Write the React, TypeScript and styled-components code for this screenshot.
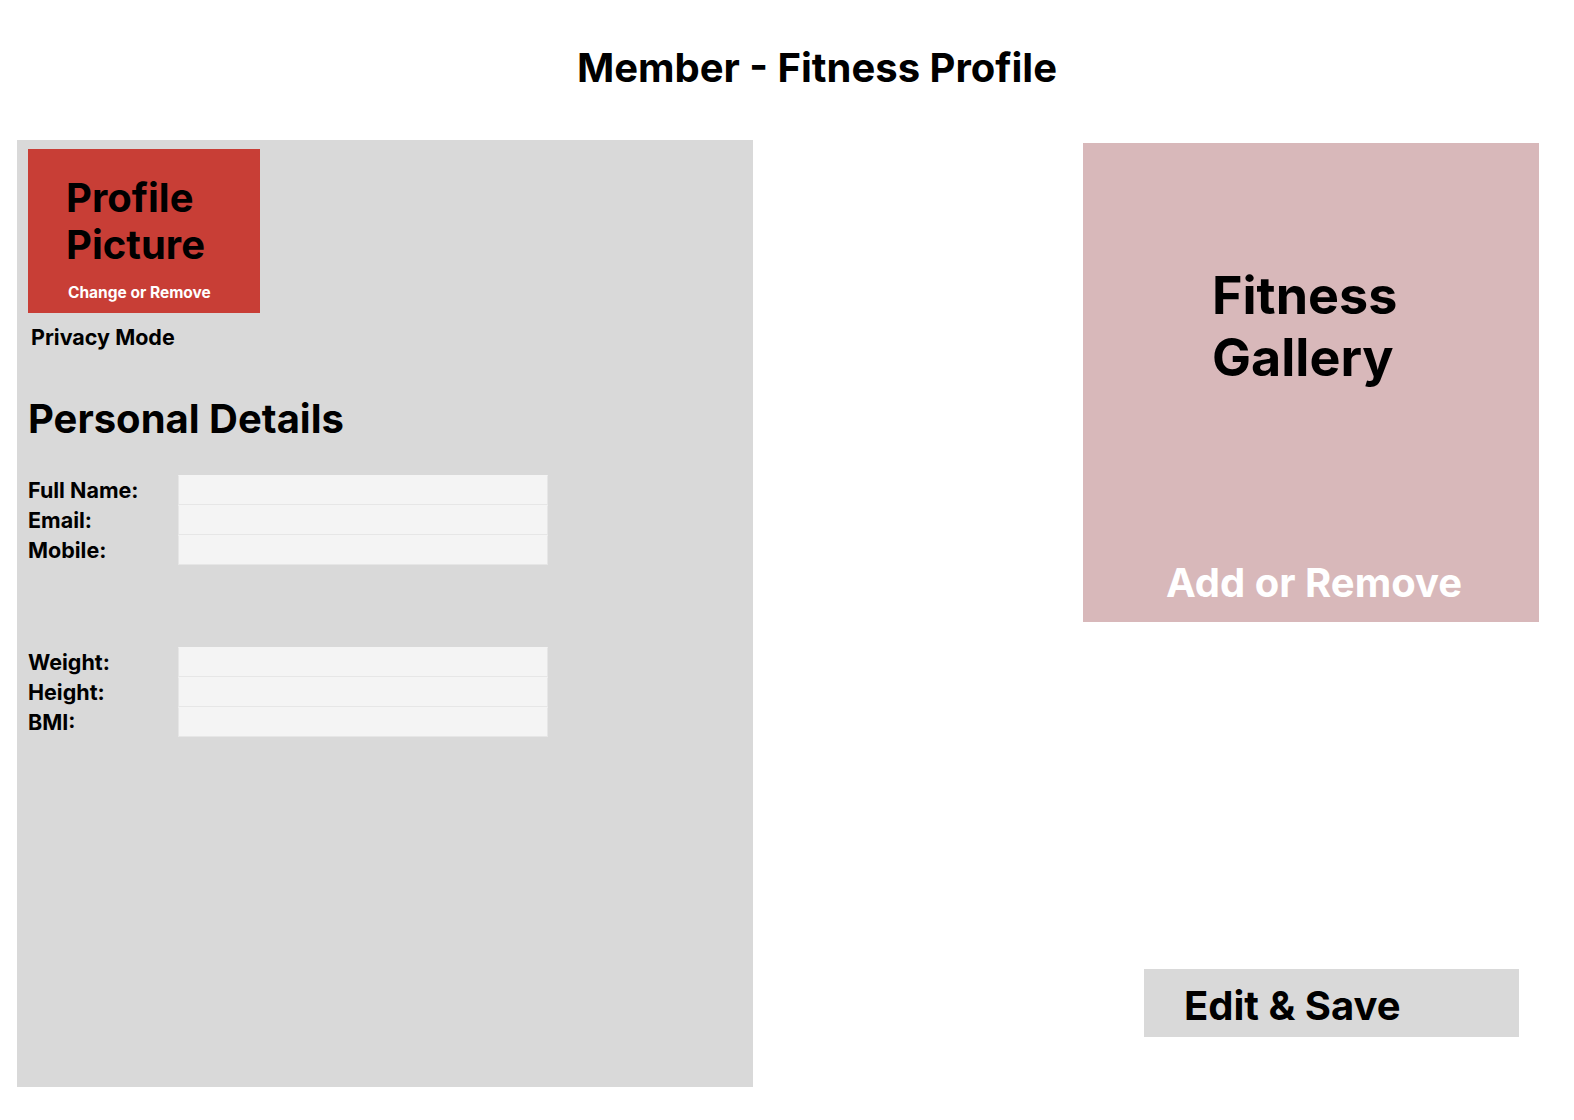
import { createGlobalStyle, styled } from "styled-components"

const GlobalStyle = createGlobalStyle`
body {
    margin: 0;
    background: #ffffff;
    font-family: Inter, "Noto Sans", sans-serif;
    color: #000000;
}
`

const contactFields = ["Full Name:", "Email:", "Mobile:"]
const bodyFields = ["Weight:", "Height:", "BMI:"]

function FieldGroup({ labels, top }: { labels: string[]; top: number }) {
    return (
        <Fields $top={top}>
            {labels.map((label) => (
                <FieldRow key={label}>
                    <Label>{label}</Label>
                    <Input />
                </FieldRow>
            ))}
        </Fields>
    )
}

export default function App() {
    return (
        <>
            <GlobalStyle />
            <Page>
                <Header>Member - Fitness Profile</Header>
                <Main>
                    <ProfilePanel>
                        <Avatar>
                            <AvatarTitle>Profile<br />Picture</AvatarTitle>
                            <AvatarAction>Change or Remove</AvatarAction>
                        </Avatar>
                        <Privacy>Privacy Mode</Privacy>
                        <SectionTitle>Personal Details</SectionTitle>
                        <FieldGroup labels={contactFields} top={32} />
                        <FieldGroup labels={bodyFields} top={82} />
                    </ProfilePanel>
                    <SideColumn>
                        <Gallery>
                            <GalleryTitle>Fitness<br />Gallery</GalleryTitle>
                            <GalleryAction>Add or Remove</GalleryAction>
                        </Gallery>
                        <SaveButton>Edit &amp; Save</SaveButton>
                    </SideColumn>
                </Main>
            </Page>
        </>
    )
}

const Page = styled.div`
width: 1574px;
min-height: 1120px;
`
const Header = styled.h1`
margin: 0;
padding: 44px 0 0 60px;
height: 140px;
box-sizing: border-box;
text-align: center;
font-size: 40px;
line-height: 48px;
font-weight: 700;
`
const Main = styled.div`
display: grid;
grid-template-columns: 736px 456px;
column-gap: 330px;
padding: 0 17px;
align-items: start;
`
const ProfilePanel = styled.section`
height: 947px;
background-color: #d9d9d9;
padding: 9px 11px;
box-sizing: border-box;
display: flex;
flex-direction: column;
`
const Avatar = styled.div`
width: 232px;
height: 164px;
background-color: #c83e36;
padding: 25px 0 0 38px;
box-sizing: border-box;
`
const AvatarTitle = styled.div`
font-size: 40px;
line-height: 47px;
font-weight: 700;
`
const AvatarAction = styled.div`
margin: 16px 0 0 2px;
font-size: 15.5px;
line-height: 18px;
font-weight: 700;
color: #ffffff;
`
const Privacy = styled.div`
margin: 12px 0 0 3px;
font-size: 21.5px;
line-height: 25px;
font-weight: 700;
`
const SectionTitle = styled.h2`
margin: 45px 0 0;
font-size: 40px;
line-height: 48px;
font-weight: 700;
`
const Fields = styled.div<{ $top: number }>`
margin-top: ${(p) => p.$top}px;
display: flex;
flex-direction: column;
`
const FieldRow = styled.div`
display: grid;
grid-template-columns: 150px 370px;
align-items: center;
height: 30px;
`
const Label = styled.span`
font-size: 21.5px;
line-height: 30px;
font-weight: 700;
`
const Input = styled.div`
height: 30px;
box-sizing: border-box;
background-color: #f4f4f4;
border: 1px solid #e6e6e6;
border-top-color: #f4f4f4;
`
const SideColumn = styled.div`
margin-top: 3px;
display: flex;
flex-direction: column;
`
const Gallery = styled.div`
height: 479px;
background-color: #d8b8ba;
padding: 122px 0 15px;
box-sizing: border-box;
display: flex;
flex-direction: column;
`
const GalleryTitle = styled.div`
padding-left: 129px;
font-size: 52px;
line-height: 62px;
font-weight: 700;
`
const GalleryAction = styled.div`
margin-top: auto;
padding-left: 6px;
text-align: center;
font-size: 40px;
line-height: 48px;
font-weight: 700;
color: #ffffff;
`
const SaveButton = styled.button`
margin: 347px 0 0 61px;
width: 375px;
height: 68px;
border: none;
background-color: #d9d9d9;
padding: 5px 0 0 40px;
text-align: left;
font-family: inherit;
font-size: 40px;
line-height: 48px;
font-weight: 700;
color: #000000;
`
